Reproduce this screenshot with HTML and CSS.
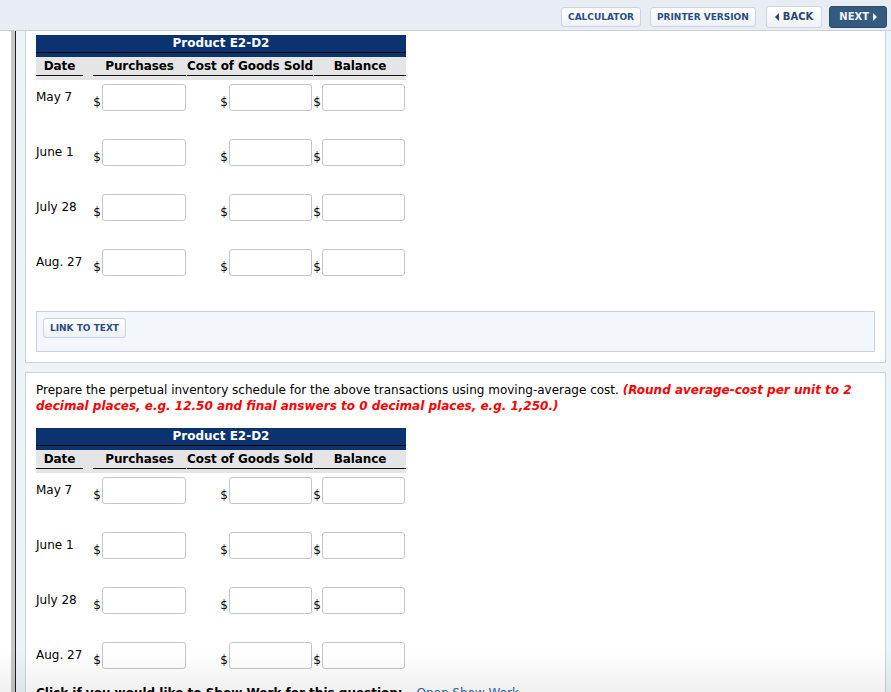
FILE: index.html
```html
<!DOCTYPE html>
<html lang="en">
<head>
<meta charset="utf-8">
<title>Product E2-D2</title>
<link rel="stylesheet" href="styles.css">
</head>
<body>
<div class="topbar">
  <button class="tb-btn">CALCULATOR</button>
  <button class="tb-btn tb-gap">PRINTER VERSION</button>
  <button class="tb-btn tb-nav tb-gap2"><span class="tri-l"></span>BACK</button>
  <button class="tb-btn tb-next"><span>NEXT</span><span class="tri-r"></span></button>
</div>

<div class="layout">
  <div class="frame">
    <div class="frame-inner">
      <section class="panel panel-first">
        <div class="sched">
          <div class="sched-title">Product E2-D2</div>
          <div class="sched-head">
            <div class="hc hc-date"><span>Date</span></div>
            <div class="hc"><span>Purchases</span></div>
            <div class="hc hc-shift"><span>Cost of Goods Sold</span></div>
            <div class="hc hc-shift"><span>Balance</span></div>
          </div>
          <div class="sched-row">
            <div class="date">May 7</div>
            <div class="money"><span class="cur">$</span><input class="amt amt-w" type="text"></div>
            <div class="money money-r"><span class="cur">$</span><input class="amt" type="text"></div>
            <div class="money money-r"><span class="cur">$</span><input class="amt" type="text"></div>
          </div>
          <div class="sched-row">
            <div class="date">June 1</div>
            <div class="money"><span class="cur">$</span><input class="amt amt-w" type="text"></div>
            <div class="money money-r"><span class="cur">$</span><input class="amt" type="text"></div>
            <div class="money money-r"><span class="cur">$</span><input class="amt" type="text"></div>
          </div>
          <div class="sched-row">
            <div class="date">July 28</div>
            <div class="money"><span class="cur">$</span><input class="amt amt-w" type="text"></div>
            <div class="money money-r"><span class="cur">$</span><input class="amt" type="text"></div>
            <div class="money money-r"><span class="cur">$</span><input class="amt" type="text"></div>
          </div>
          <div class="sched-row">
            <div class="date">Aug. 27</div>
            <div class="money"><span class="cur">$</span><input class="amt amt-w" type="text"></div>
            <div class="money money-r"><span class="cur">$</span><input class="amt" type="text"></div>
            <div class="money money-r"><span class="cur">$</span><input class="amt" type="text"></div>
          </div>
        </div>
        <div class="linkbox">
          <button class="link-btn">LINK TO TEXT</button>
        </div>
      </section>

      <section class="panel panel-second">
        <p class="question">Prepare the perpetual inventory schedule for the above transactions using moving-average cost. <em class="hint">(Round average-cost per unit to 2 decimal places, e.g. 12.50 and final answers to 0 decimal places, e.g. 1,250.)</em></p>
        <div class="sched">
          <div class="sched-title">Product E2-D2</div>
          <div class="sched-head">
            <div class="hc hc-date"><span>Date</span></div>
            <div class="hc"><span>Purchases</span></div>
            <div class="hc hc-shift"><span>Cost of Goods Sold</span></div>
            <div class="hc hc-shift"><span>Balance</span></div>
          </div>
          <div class="sched-row">
            <div class="date">May 7</div>
            <div class="money"><span class="cur">$</span><input class="amt amt-w" type="text"></div>
            <div class="money money-r"><span class="cur">$</span><input class="amt" type="text"></div>
            <div class="money money-r"><span class="cur">$</span><input class="amt" type="text"></div>
          </div>
          <div class="sched-row">
            <div class="date">June 1</div>
            <div class="money"><span class="cur">$</span><input class="amt amt-w" type="text"></div>
            <div class="money money-r"><span class="cur">$</span><input class="amt" type="text"></div>
            <div class="money money-r"><span class="cur">$</span><input class="amt" type="text"></div>
          </div>
          <div class="sched-row">
            <div class="date">July 28</div>
            <div class="money"><span class="cur">$</span><input class="amt amt-w" type="text"></div>
            <div class="money money-r"><span class="cur">$</span><input class="amt" type="text"></div>
            <div class="money money-r"><span class="cur">$</span><input class="amt" type="text"></div>
          </div>
          <div class="sched-row">
            <div class="date">Aug. 27</div>
            <div class="money"><span class="cur">$</span><input class="amt amt-w" type="text"></div>
            <div class="money money-r"><span class="cur">$</span><input class="amt" type="text"></div>
            <div class="money money-r"><span class="cur">$</span><input class="amt" type="text"></div>
          </div>
        </div>
        <div class="showwork">
          <strong>Click if you would like to Show Work for this question:</strong>
          <a class="sw-link" href="#">Open Show Work</a>
        </div>
      </section>
    </div>
  </div>
</div>
<div class="fade"></div>
</body>
</html>
```

FILE: styles.css
```css
* { box-sizing: border-box; }

html, body {
  margin: 0;
  padding: 0;
}

body {
  font-family: "DejaVu Sans", Verdana, sans-serif;
  font-size: 12px;
  line-height: 16px;
  color: #000;
  background: #fff;
}

/* ---------- top bar ---------- */
.topbar {
  height: 31px;
  background: #e8edf4;
  border-bottom: 1px solid #c8d2df;
  display: flex;
  justify-content: flex-end;
  align-items: center;
  padding: 3px 4px 0 0;
}

.tb-btn {
  font-family: "DejaVu Sans", Verdana, sans-serif;
  font-weight: bold;
  font-size: 9px;
  color: #2b4c87;
  height: 20px;
  padding: 0 6px;
  border: 1px solid #c9d3e1;
  border-radius: 3px;
  background: linear-gradient(#ffffff, #eef2f7);
  display: flex;
  align-items: center;
  margin: 0;
}

.tb-gap { margin-left: 9px; }
.tb-gap2 { margin-left: 10px; }

.tb-nav {
  height: 22px;
  font-size: 10px;
  color: #23447c;
  padding: 0 8px 0 8px;
  background: linear-gradient(#ffffff, #eff2f6);
  border-color: #cfd6df;
}

.tb-next {
  height: 22px;
  margin-left: 7px;
  font-size: 10px;
  color: #eef3f8;
  background: #35597f;
  border-color: #2c4c6e;
  padding: 0 9px 0 9px;
}

.tri-l {
  width: 0;
  height: 0;
  border-top: 4px solid transparent;
  border-bottom: 4px solid transparent;
  border-right: 4px solid #23447c;
  margin-right: 4px;
}

.tri-r {
  width: 0;
  height: 0;
  border-top: 4px solid transparent;
  border-bottom: 4px solid transparent;
  border-left: 4px solid #eef3f8;
  margin-left: 4px;
}

/* ---------- layout ---------- */
.layout {
  display: flex;
  padding-left: 11px;
}

.frame {
  flex: 1;
  border-left: 4px solid #c7c7c7;
}

.frame-inner {
  border-left: 1px solid #1f1f1f;
  background: #eef3f8;
  padding: 0 5px 20px 9px;
  min-height: 700px;
}

.panel {
  background: #fff;
  border: 1px solid #c8d3e2;
  padding: 4px 10px 10px;
}

.panel-first {
  border-top: none;
}

.panel-second {
  margin-top: 9px;
  padding-top: 9px;
}

/* ---------- schedule ---------- */
.sched {
  width: 370px;
}

.sched-title {
  background: #0a3370;
  color: #fff;
  font-weight: bold;
  text-align: center;
  height: 22px;
  line-height: 17px;
  border-bottom: 4px solid #0a3370;
  position: relative;
}

.sched-title::after {
  content: "";
  position: absolute;
  left: 0;
  right: 0;
  top: 17px;
  height: 1px;
  background: #000;
}

.sched-head {
  display: grid;
  grid-template-columns: 57px 93px 127px 93px;
  background: #e5e5e5;
  padding-bottom: 4px;
  font-weight: bold;
}

.hc span {
  display: block;
  text-align: center;
  padding: 1px 0;
  line-height: 16px;
  white-space: nowrap;
  letter-spacing: -0.1px;
  border-bottom: 1px solid #111;
}

.hc-date span { width: 47px; }
.hc-shift { padding-left: 1px; }

.sched-row {
  display: grid;
  grid-template-columns: 57px 93px 127px 93px;
  padding: 4px 0 24px;
}

.sched-row:last-child {
  padding-bottom: 0;
}

.date {
  padding-top: 5px;
  line-height: 16px;
}

.money {
  display: flex;
  justify-content: flex-end;
  align-items: flex-end;
}

.money-r {
  padding-right: 1px;
}

.cur {
  line-height: 16px;
  padding-bottom: 1px;
  margin-right: 1px;
}

.amt {
  width: 83px;
  height: 27px;
  border: 1px solid #c5c5c5;
  border-radius: 3px;
  background: #fff;
  margin: 0;
  padding: 0 4px;
  font-family: "DejaVu Sans", Verdana, sans-serif;
  font-size: 12px;
}

.amt-w { width: 84px; }

/* ---------- link box ---------- */
.linkbox {
  margin-top: 35px;
  background: #f3f6fa;
  border: 1px solid #c6d1e1;
  padding: 6px 6px 13px;
}

.link-btn {
  font-family: "DejaVu Sans", Verdana, sans-serif;
  font-weight: bold;
  font-size: 9px;
  color: #2b4c87;
  height: 20px;
  padding: 0 6px;
  margin: 0;
  border: 1px solid #c9d2de;
  border-radius: 3px;
  background: linear-gradient(#ffffff, #edf1f6);
}

/* ---------- question ---------- */
.question {
  margin: 0;
  line-height: 16px;
}

.hint {
  color: #ff0000;
  font-weight: bold;
  font-style: italic;
}

.panel-second .sched {
  margin-top: 14px;
}

.showwork {
  margin-top: 16px;
  line-height: 16px;
}

.sw-link {
  margin-left: 10px;
  color: #2c62ad;
  text-decoration: none;
}

/* bottom fade over the viewport */
.fade {
  position: fixed;
  left: 0;
  right: 0;
  bottom: 0;
  height: 40px;
  background: linear-gradient(rgba(0, 0, 0, 0), rgba(0, 0, 0, 0.06));
  pointer-events: none;
}
```
